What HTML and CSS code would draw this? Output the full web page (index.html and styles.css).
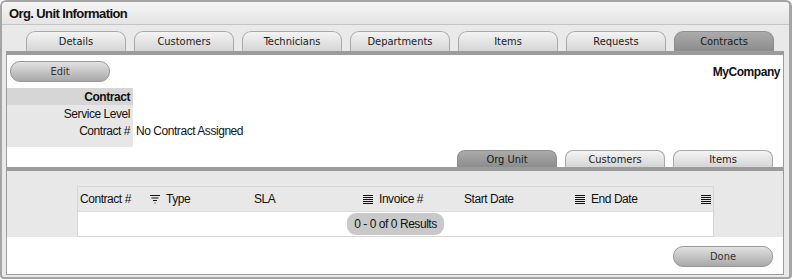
FILE: index.html
```html
<!DOCTYPE html>
<html>
  <head>
    <meta charset="utf-8" />
    <link rel="stylesheet" href="styles.css">
  </head>
  <body>
    <div class="window">
      <div class="titlebar">Org. Unit Information</div>

      <ul class="tabs main-tabs">
        <li>Details</li>
        <li>Customers</li>
        <li>Technicians</li>
        <li>Departments</li>
        <li>Items</li>
        <li>Requests</li>
        <li class="active">Contracts</li>
      </ul>

      <div class="content">
        <div class="top">
          <button type="button" class="btn">Edit</button>
          <span class="company">MyCompany</span>
        </div>

        <table class="details">
          <tr class="head">
            <th>Contract</th>
            <td></td>
          </tr>
          <tr>
            <th>Service Level</th>
            <td></td>
          </tr>
          <tr>
            <th>Contract #</th>
            <td>No Contract Assigned</td>
          </tr>
          <tr class="spacer">
            <th></th>
            <td></td>
          </tr>
        </table>

        <ul class="tabs sub-tabs">
          <li class="active">Org Unit</li>
          <li>Customers</li>
          <li>Items</li>
        </ul>

        <div class="list-area">
          <div class="grid">
            <div class="grid-head">
              <div class="col c1">Contract #</div>
              <div class="col c2">
                <svg class="ico" width="10" height="10" viewBox="0 0 10 10">
                  <path d="M0 1.5h10M1.5 4h7M3 6.5h4" stroke="#111" stroke-width="1" />
                  <rect x="4.5" y="8.5" width="1" height="1" fill="#111" />
                </svg>
                Type
              </div>
              <div class="col c3">SLA</div>
              <div class="col c4">
                <svg class="ico" width="10" height="10" viewBox="0 0 10 10">
                  <path d="M0 1.5h10M0 3.5h10M0 5.5h10M0 7.5h10M0 9.5h10" stroke="#111" stroke-width="1" />
                </svg>
                Invoice #
              </div>
              <div class="col c5">Start Date</div>
              <div class="col c6">
                <svg class="ico" width="10" height="10" viewBox="0 0 10 10">
                  <path d="M0 1.5h10M0 3.5h10M0 5.5h10M0 7.5h10M0 9.5h10" stroke="#111" stroke-width="1" />
                </svg>
                End Date
              </div>
              <div class="col c7">
                <svg class="ico" width="10" height="10" viewBox="0 0 10 10">
                  <path d="M0 1.5h10M0 3.5h10M0 5.5h10M0 7.5h10M0 9.5h10" stroke="#111" stroke-width="1" />
                </svg>
              </div>
            </div>
            <div class="grid-body">
              <span class="results">0 - 0 of 0 Results</span>
            </div>
          </div>
        </div>

        <div class="footer">
          <button type="button" class="btn">Done</button>
        </div>
      </div>
    </div>
  </body>
</html>
```

FILE: styles.css
```css
body {
  margin: 0;
  background: #fff;
  font-family: 'Liberation Sans', Arial, sans-serif;
  font-size: 12px;
  letter-spacing: -0.45px;
  color: #111;
}

.window {
  width: 792px;
  height: 279px;
  box-sizing: border-box;
  border: 2px solid #a5a5a5;
  border-right-width: 3px;
  border-radius: 6px 6px 4px 4px;
  background: #e9e9e9;
  display: flex;
  flex-direction: column;
}

.titlebar {
  height: 22px;
  line-height: 24px;
  padding-left: 7px;
  font-size: 13px;
  font-weight: bold;
  letter-spacing: -0.6px;
  color: #111;
  background: linear-gradient(to bottom, #f5f5f5, #e4e4e4);
  border-bottom: 1px solid #c4c4c4;
  border-radius: 4px 4px 0 0;
}

/* tabs */
.tabs {
  list-style: none;
  margin: 0;
  padding: 0;
  display: flex;
  gap: 8px;
}

.tabs li {
  width: 98px;
  height: 19px;
  line-height: 20px;
  text-align: center;
  font-family: 'DejaVu Sans Condensed', 'DejaVu Sans', sans-serif;
  font-size: 11px;
  letter-spacing: 0;
  color: #1a1a1a;
  background: linear-gradient(to bottom, #f4f4f4, #d5d5d5);
  border: 1px solid #a9a9a9;
  border-bottom: none;
  border-radius: 9px 9px 0 0;
}

.tabs li.active {
  background: linear-gradient(to bottom, #ababab, #8c8c8c);
  border-color: #8e8e8e;
}

.main-tabs {
  margin: 6px 0 0 24px;
}

.sub-tabs {
  justify-content: flex-end;
  margin: 3px 10px 0 0;
}

.sub-tabs li {
  height: 16px;
  line-height: 17px;
  border-radius: 8px 8px 0 0;
}

/* content box */
.content {
  flex: 1;
  margin: 0 5px 2px 4px;
  background: #fff;
  border: 1px solid #9c9c9c;
  border-top: 4px solid #9c9c9c;
  display: flex;
  flex-direction: column;
}

.top {
  display: flex;
  justify-content: space-between;
  align-items: flex-start;
  padding: 6px 3px 0 3px;
  height: 27px;
}

.company {
  font-weight: bold;
  margin-top: 4px;
}

.btn {
  width: 100px;
  height: 21px;
  padding: 0;
  font-family: 'DejaVu Sans Condensed', 'DejaVu Sans', sans-serif;
  font-size: 11px;
  color: #333;
  background: linear-gradient(to bottom, #e2e2e2, #a8a8a8);
  border: 1px solid #999;
  border-radius: 10px;
}

/* details */
.details {
  border-collapse: collapse;
}

.details th {
  width: 120px;
  padding: 0 3px;
  text-align: right;
  font-weight: normal;
  background: #e7e7e7;
  height: 17px;
}

.details td {
  padding: 0 3px;
  height: 17px;
}

.details .head th {
  background: #d6d6d6;
  font-weight: bold;
}

.details .spacer th,
.details .spacer td {
  height: 8px;
}

/* list */
.list-area {
  background: #e8e8e8;
  border-top: 4px solid #9c9c9c;
  padding: 15px 0 0 70px;
  height: 51px;
}

.grid {
  width: 635px;
  border: 1px solid #d6d6d6;
  background: #fff;
}

.grid-head {
  display: flex;
  height: 24px;
  align-items: center;
  background: #e8e8e8;
  border-bottom: 1px solid #dcdcdc;
}

.col {
  display: flex;
  align-items: center;
  gap: 6px;
  padding-left: 2px;
}

.c1 { width: 68px; }
.c2 { width: 102px; }
.c3 { width: 107px; }
.c4 { width: 99px; }
.c5 { width: 109px; }
.c6 { width: 124px; }
.c7 { flex: 1; }

.ico {
  display: block;
}

.grid-body {
  height: 24px;
  display: flex;
  align-items: center;
  justify-content: center;
}

.results {
  background: #c9c9c9;
  border-radius: 9px;
  padding: 4px 7px;
}

.footer {
  flex: 1;
  display: flex;
  justify-content: flex-end;
  align-items: flex-start;
  padding: 9px 10px 0 0;
}
```
